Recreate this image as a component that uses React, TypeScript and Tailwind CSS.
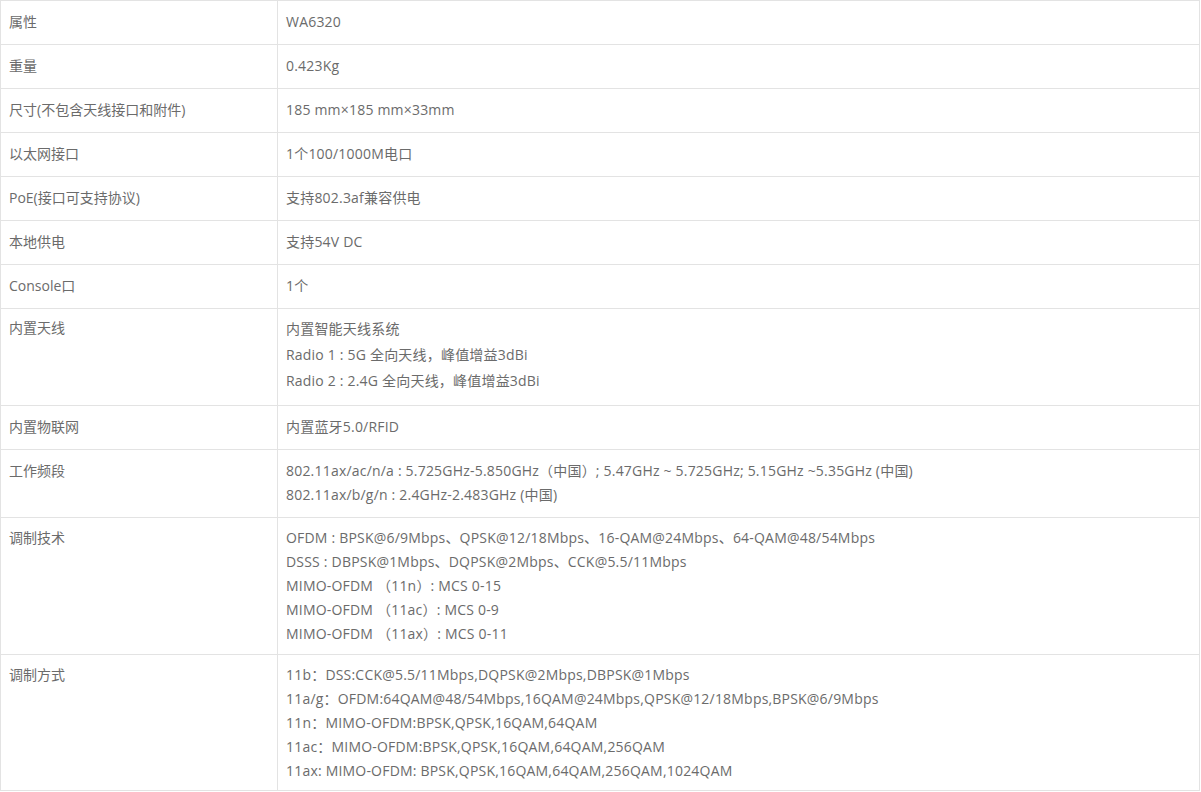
const rows: { label: string; lines: string[]; pad: string; lh: string }[] = [
  { label: '属性', lines: ['WA6320'], pad: 'pt-[9px] pb-[10px]', lh: 'leading-6' },
  { label: '重量', lines: ['0.423Kg'], pad: 'pt-[9px] pb-[10px]', lh: 'leading-6' },
  { label: '尺寸(不包含天线接口和附件)', lines: ['185 mm×185 mm×33mm'], pad: 'pt-[9px] pb-[10px]', lh: 'leading-6' },
  { label: '以太网接口', lines: ['1个100/1000M电口'], pad: 'pt-[9px] pb-[10px]', lh: 'leading-6' },
  { label: 'PoE(接口可支持协议)', lines: ['支持802.3af兼容供电'], pad: 'pt-[9px] pb-[10px]', lh: 'leading-6' },
  { label: '本地供电', lines: ['支持54V DC'], pad: 'pt-[9px] pb-[10px]', lh: 'leading-6' },
  { label: 'Console口', lines: ['1个'], pad: 'pt-[9px] pb-[10px]', lh: 'leading-6' },
  {
    label: '内置天线',
    lines: ['内置智能天线系统', 'Radio 1 : 5G 全向天线，峰值增益3dBi', 'Radio 2 : 2.4G 全向天线，峰值增益3dBi'],
    pad: 'pt-[7px] pb-[11px]',
    lh: 'leading-[26px]',
  },
  { label: '内置物联网', lines: ['内置蓝牙5.0/RFID'], pad: 'pt-[9px] pb-[10px]', lh: 'leading-6' },
  {
    label: '工作频段',
    lines: [
      '802.11ax/ac/n/a : 5.725GHz-5.850GHz（中国）; 5.47GHz ~ 5.725GHz; 5.15GHz ~5.35GHz (中国)',
      '802.11ax/b/g/n : 2.4GHz-2.483GHz (中国)',
    ],
    pad: 'pt-[9px] pb-[10px]',
    lh: 'leading-6',
  },
  {
    label: '调制技术',
    lines: [
      'OFDM : BPSK@6/9Mbps、QPSK@12/18Mbps、16-QAM@24Mbps、64-QAM@48/54Mbps',
      'DSSS : DBPSK@1Mbps、DQPSK@2Mbps、CCK@5.5/11Mbps',
      'MIMO-OFDM （11n）: MCS 0-15',
      'MIMO-OFDM （11ac）: MCS 0-9',
      'MIMO-OFDM （11ax）: MCS 0-11',
    ],
    pad: 'pt-[8px] pb-[8px]',
    lh: 'leading-6',
  },
  {
    label: '调制方式',
    lines: [
      '11b：DSS:CCK@5.5/11Mbps,DQPSK@2Mbps,DBPSK@1Mbps',
      '11a/g：OFDM:64QAM@48/54Mbps,16QAM@24Mbps,QPSK@12/18Mbps,BPSK@6/9Mbps',
      '11n：MIMO-OFDM:BPSK,QPSK,16QAM,64QAM',
      '11ac：MIMO-OFDM:BPSK,QPSK,16QAM,64QAM,256QAM',
      '11ax: MIMO-OFDM: BPSK,QPSK,16QAM,64QAM,256QAM,1024QAM',
    ],
    pad: 'pt-[8px] pb-[7px]',
    lh: 'leading-6',
  },
]

export default function App() {
  return (
    <div className="min-h-screen bg-white font-['Open_Sans','Noto_Sans_CJK_SC',sans-serif] text-[14px] text-[#6b6b6b]">
      <table className="w-[1200px] table-fixed border-collapse">
        <colgroup>
          <col className="w-[277px]" />
          <col />
        </colgroup>
        <tbody>
          {rows.map((row, i) => (
            <tr key={`spec-${i}`}>
              <td className={`border border-[#e3e3e3] px-2 align-top ${row.pad} ${row.lh}`}>
                <div className="leading-6">{row.label}</div>
              </td>
              <td className={`border border-[#e3e3e3] px-2 align-top tracking-[0.2px] ${row.pad} ${row.lh}`}>
                {row.lines.map((line, j) => (
                  <div key={`line-${i}-${j}`}>{line}</div>
                ))}
              </td>
            </tr>
          ))}
        </tbody>
      </table>
    </div>
  )
}
